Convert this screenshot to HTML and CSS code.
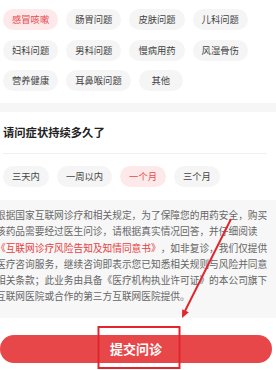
FILE: index.html
```html
<!DOCTYPE html>
<html lang="zh-CN">
<head>
<meta charset="utf-8">
<title>问诊</title>
<link rel="stylesheet" href="styles.css">
</head>
<body>
<div class="page">
  <div class="tags">
    <span class="tag active">感冒咳嗽</span>
    <span class="tag">肠胃问题</span>
    <span class="tag">皮肤问题</span>
    <span class="tag">儿科问题</span>
    <span class="tag">妇科问题</span>
    <span class="tag">男科问题</span>
    <span class="tag">慢病用药</span>
    <span class="tag">风湿骨伤</span>
    <span class="tag">营养健康</span>
    <span class="tag">耳鼻喉问题</span>
    <span class="tag">其他</span>
  </div>
  <div class="band"></div>
  <div class="section-title">请问症状持续多久了</div>
  <div class="divider"></div>
  <div class="tags durations">
    <span class="tag">三天内</span>
    <span class="tag">一周以内</span>
    <span class="tag active">一个月</span>
    <span class="tag">三个月</span>
  </div>
  <div class="notice">
    <p>根据国家互联网诊疗和相关规定，为了保障您的用药安全，购买该药品需要经过医生问诊，请根据真实情况回答，并仔细阅读<span class="link">《互联网诊疗风险告知及知情同意书》</span>，如非复诊，我们仅提供医疗咨询服务，继续咨询即表示您已知悉相关规则与风险并同意相关条款；此业务由具备《医疗机构执业许可证》的本公司旗下互联网医院或合作的第三方互联网医院提供。</p>
  </div>
  <div class="submit">提交问诊</div>
  <svg class="annot" width="276" height="370" viewBox="0 0 276 370">
    <rect x="98.5" y="327" width="81" height="41" fill="none" stroke="#e0262c" stroke-width="2"/>
    <line x1="231" y1="219" x2="185" y2="311" stroke="#e0262c" stroke-width="2"/>
    <polygon points="182,318 188.8,312.2 182.2,309.2" fill="#e0262c"/>
  </svg>
</div>
</body>
</html>
```

FILE: styles.css
```css
html, body {
  margin: 0;
  padding: 0;
  background: #ffffff;
}
body {
  width: 276px;
  height: 370px;
  overflow: hidden;
  font-family: "Noto Sans CJK SC", "Noto Sans", sans-serif;
  text-spacing-trim: space-all;
}
.page {
  position: relative;
  width: 276px;
  height: 370px;
  overflow: hidden;
}
.tags {
  display: flex;
  flex-wrap: wrap;
  gap: 9.5px 8px;
  padding: 9px 0 0 3px;
  width: 260px;
}
.tag {
  box-sizing: border-box;
  height: 21px;
  line-height: 21px;
  padding: 0 9px;
  min-width: 44px;
  text-align: center;
  border-radius: 10.5px;
  background: #f5f5f5;
  color: #444444;
  font-size: 9.3px;
  white-space: nowrap;
}
.tag.active {
  background: #fde9e9;
  color: #e8484a;
}
.band {
  margin-top: 12px;
  height: 9px;
  background: #f6f6f6;
}
.section-title {
  margin: 12px 0 0 3px;
  font-size: 11.3px;
  line-height: 16px;
  font-weight: 700;
  color: #222222;
}
.divider {
  margin: 13px 9px 0 3px;
  height: 1px;
  background: #f0f0f0;
}
.durations {
  padding-top: 0;
  margin-top: 12px;
}
.notice {
  margin-top: 13px;
  background: #f7f7f7;
  padding: 7px 0 13px;
}
.notice p {
  margin: 0 0 0 -4px;
  width: 273px;
  font-size: 9.7px;
  line-height: 16.3px;
  color: #666666;
}
.link {
  color: #e5403f;
}
.submit {
  margin-top: 17px;
  width: 272px;
  height: 28px;
  line-height: 28px;
  border-radius: 14px;
  background: #e8474a;
  color: #ffffff;
  text-align: center;
  font-size: 13px;
  font-weight: 700;
}
.annot {
  position: absolute;
  left: 0;
  top: 0;
  pointer-events: none;
}
```
